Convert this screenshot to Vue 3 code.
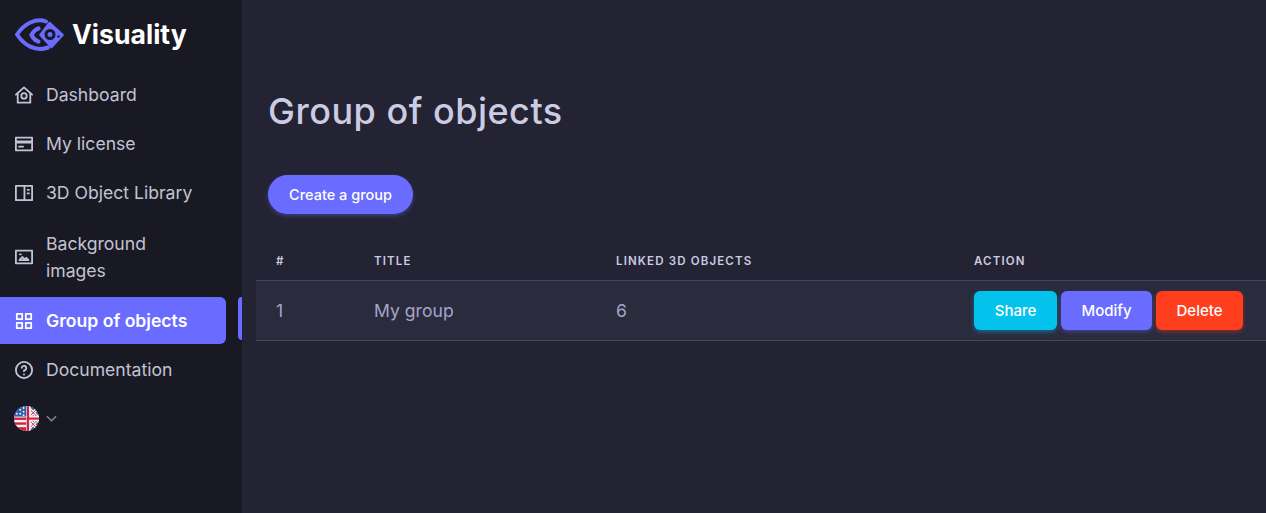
<template>
  <div class="layout">
    <aside class="sidebar">
      <div class="brand">
        <svg class="brand-logo" viewBox="0 0 49 33" fill="none" xmlns="http://www.w3.org/2000/svg">
          <path d="M31 3.500C21 -0.500 9 6 2 16.500C9 27 20 34 33 29.500" stroke="#696cff" stroke-width="4" stroke-linecap="round" />
          <path d="M23.500 10.500C20 11.500 18 14 16.500 17C18 20 20 22.500 23.500 23.500" stroke="#696cff" stroke-width="4.200" stroke-linecap="round" />
          <path d="M34.500 5L47.500 17L36.500 29L25.500 17Z" fill="#696cff" stroke="#696cff" stroke-width="2.500" stroke-linejoin="round" />
          <circle cx="35" cy="16.500" r="4" fill="#696cff" stroke="#191923" stroke-width="3" />
          <circle cx="43.500" cy="18.500" r="1.200" fill="#191923" />
        </svg>
        <span class="brand-name">Visuality</span>
      </div>

      <nav class="menu">
        <a v-for="item in menu" :key="item.label" class="menu-item" :class="{ active: item.active, wrap: item.wrap }">
          <svg class="menu-icon" viewBox="2 2 20 20" fill="none" stroke="currentColor" stroke-width="2" stroke-linejoin="round" stroke-linecap="round" xmlns="http://www.w3.org/2000/svg">
            <path v-for="d in item.paths" :key="d" :d="d" />
          </svg>
          <span>{{ item.label }}</span>
        </a>
      </nav>

      <div class="lang">
        <svg class="flag" viewBox="0 0 26 26" xmlns="http://www.w3.org/2000/svg">
          <defs>
            <clipPath id="flag-circle"><circle cx="13" cy="13" r="13" /></clipPath>
          </defs>
          <g clip-path="url(#flag-circle)">
            <rect width="26" height="26" fill="#f4f4f6" />
            <rect x="0" y="12" width="13" height="2.500" fill="#d8203c" />
            <rect x="0" y="17" width="13" height="2.500" fill="#d8203c" />
            <rect x="0" y="22" width="13" height="4" fill="#d8203c" />
            <rect x="0" y="0" width="13" height="11" fill="#2a5db0" />
            <g fill="#f4f4f6">
              <circle cx="3" cy="8" r="1" /><circle cx="6.500" cy="4" r="1" /><circle cx="6.500" cy="8" r="1" />
              <circle cx="10" cy="2" r="1" /><circle cx="10" cy="6" r="1" /><circle cx="10" cy="9.500" r="1" />
            </g>
            <rect x="13" y="0" width="13" height="26" fill="#1f4f9e" />
            <path d="M14 1L26 13M14 25L26 13M26 1L14 13M26 25L14 13" stroke="#f4f4f6" stroke-width="3.500" />
            <path d="M14 1L26 13M14 25L26 13M26 1L14 13M26 25L14 13" stroke="#d8203c" stroke-width="1" />
            <rect x="13" y="0" width="4.500" height="26" fill="#f4f4f6" />
            <rect x="13" y="10.500" width="13" height="5" fill="#f4f4f6" />
            <rect x="13.500" y="0" width="2.200" height="26" fill="#d8203c" />
            <rect x="13" y="12" width="13" height="2.200" fill="#d8203c" />
          </g>
        </svg>
        <svg class="caret" viewBox="0 0 12 7" fill="none" xmlns="http://www.w3.org/2000/svg">
          <path d="M1 1L6 6L11 1" stroke="#8b8b9c" stroke-width="1.300" />
        </svg>
      </div>

      <span class="active-mark"></span>
    </aside>

    <main class="content">
      <h1 class="title">Group of objects</h1>
      <button class="btn-create">Create a group</button>

      <table class="groups">
        <colgroup>
          <col class="col-num" />
          <col class="col-title" />
          <col class="col-linked" />
          <col />
        </colgroup>
        <thead>
          <tr>
            <th>#</th>
            <th>Title</th>
            <th>Linked 3D objects</th>
            <th>Action</th>
          </tr>
        </thead>
        <tbody>
          <tr v-for="row in rows" :key="row.id">
            <td>{{ row.id }}</td>
            <td>{{ row.title }}</td>
            <td>{{ row.linked }}</td>
            <td>
              <div class="actions">
                <button class="btn btn-share">Share</button>
                <button class="btn btn-modify">Modify</button>
                <button class="btn btn-delete">Delete</button>
              </div>
            </td>
          </tr>
        </tbody>
      </table>
    </main>
  </div>
</template>

<script setup>
const menu = [
  {
    label: 'Dashboard',
    paths: [
      'M3 11.500L12 3.500L21 11.500',
      'M5 10V20.500H19V10',
      'M12 10A3 3 0 1 1 12 16A3 3 0 1 1 12 10Z'
    ]
  },
  {
    label: 'My license',
    paths: ['M3 5H21V19H3Z', 'M3 9H21', 'M3 10.500H21', 'M6.500 15H11']
  },
  {
    label: '3D Object Library',
    paths: ['M3 4H21V20H3Z', 'M12.500 4V20', 'M16 8.500H17.500', 'M16 12.500H17.500']
  },
  {
    label: 'Background images',
    wrap: true,
    paths: ['M3 5H21V19H3Z', 'M7 15.500L10 12L12.500 14.500L14.500 13L17 15.500H7Z', 'M7.500 9H8.500']
  },
  {
    label: 'Group of objects',
    active: true,
    paths: ['M4 4H10V10H4Z', 'M14 4H20V10H14Z', 'M4 14H10V20H4Z', 'M14 14H20V20H14Z']
  },
  {
    label: 'Documentation',
    paths: [
      'M12 3A9 9 0 1 1 12 21A9 9 0 1 1 12 3Z',
      'M9.500 9.500A2.500 2.500 0 1 1 12 12.500V13.500',
      'M12 16.800V17'
    ]
  }
]

const rows = [{ id: 1, title: 'My group', linked: 6 }]
</script>

<style>
html,
body {
  margin: 0;
  background: #232333;
}
</style>

<style scoped>
.layout {
  display: flex;
  min-height: 513px;
  font-family: Inter, "Noto Sans", sans-serif;
  background: #232333;
  overflow: hidden;
}

.sidebar {
  position: relative;
  flex: 0 0 242px;
  width: 242px;
  height: 513px;
  background: #191923;
}

.brand {
  display: flex;
  align-items: center;
  gap: 8px;
  height: 34px;
  padding: 17px 0 0 15px;
}

.brand-logo {
  width: 49px;
  height: 33px;
}

.brand-name {
  font-size: 26.600px;
  font-weight: 700;
  color: #fff;
}

.menu {
  display: flex;
  flex-direction: column;
  gap: 2px;
  width: 226px;
  margin-top: 20px;
}

.menu-item {
  display: flex;
  align-items: center;
  gap: 13px;
  padding: 10px 16px 10px 15px;
  font-size: 17.600px;
  line-height: 27px;
  color: #c3c3d4;
  border-radius: 0 6px 6px 0;
}

.menu-item.wrap {
  padding-top: 12px;
  padding-bottom: 11px;
}

.menu-item.active {
  background: #696cff;
  color: #fff;
  font-weight: 600;
}

.menu-icon {
  flex: none;
  width: 18px;
  height: 18px;
}

.lang {
  display: flex;
  align-items: center;
  gap: 7px;
  margin: 13px 0 0 14px;
}

.flag {
  width: 25px;
  height: 25px;
}

.caret {
  width: 11px;
  height: 7px;
}

.active-mark {
  position: absolute;
  top: 297px;
  right: 0;
  width: 4px;
  height: 43px;
  background: #696cff;
  border-radius: 4px 0 0 4px;
}

.content {
  flex: 1;
  min-width: 0;
  padding: 0 0 0 14px;
}

.title {
  margin: 87px 0 0 12px;
  font-size: 36px;
  line-height: 48px;
  font-weight: 500;
  letter-spacing: 0.5px;
  color: #cbcbe2;
}

.btn-create {
  display: block;
  height: 39px;
  width: 145px;
  margin: 40px 0 0 12px;
  padding: 0;
  border: none;
  border-radius: 20px;
  background: #696cff;
  color: #fff;
  font: 500 14.500px Inter, "Noto Sans", sans-serif;
  box-shadow: 0 2px 4px rgba(105, 108, 255, 0.4);
}

.groups {
  width: 1010px;
  margin-top: 27px;
  border-collapse: collapse;
  table-layout: fixed;
}

.col-num {
  width: 98px;
}

.col-title {
  width: 242px;
}

.col-linked {
  width: 358px;
}

.groups th {
  height: 39px;
  padding: 0 0 0 20px;
  text-align: left;
  font-size: 11.500px;
  font-weight: 600;
  letter-spacing: 1.150px;
  text-transform: uppercase;
  color: #cbcbe2;
  border-bottom: 1px solid #444564;
}

.groups td {
  height: 59px;
  padding: 0 0 0 20px;
  font-size: 17.600px;
  color: #a3a4cc;
  background: #2b2b3e;
  border-bottom: 1px solid #444564;
}

.actions {
  display: flex;
  gap: 4px;
}

.btn {
  height: 39px;
  padding: 0;
  border: none;
  border-radius: 6px;
  color: #fff;
  font: 500 15px Inter, "Noto Sans", sans-serif;
}

.btn-share {
  width: 83px;
  background: #03c3ec;
  box-shadow: 0 2px 4px rgba(3, 195, 236, 0.4);
}

.btn-modify {
  width: 91px;
  background: #696cff;
  box-shadow: 0 2px 4px rgba(105, 108, 255, 0.4);
}

.btn-delete {
  width: 87px;
  background: #ff3e1d;
  box-shadow: 0 2px 4px rgba(255, 62, 29, 0.4);
}
</style>
